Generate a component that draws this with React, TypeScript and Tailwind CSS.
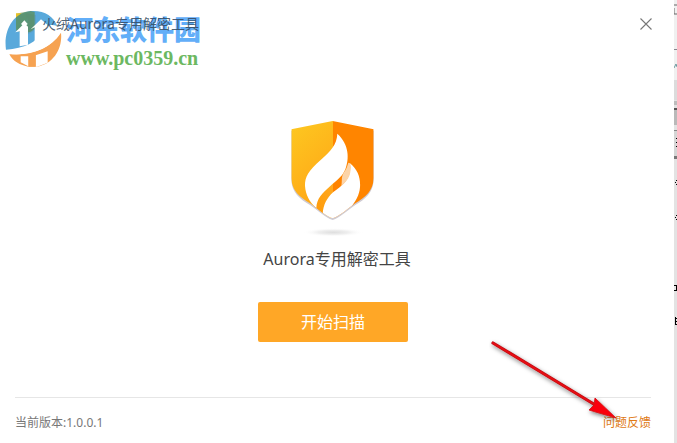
import React from 'react';

const Shield: React.FC = () => (
  <svg viewBox="60 30 255 351" className="w-[85px] h-[117px]" aria-hidden="true">
    <defs>
      <linearGradient id="gold" x1="0" y1="0" x2="0.4" y2="1">
        <stop offset="0" stopColor="#fdc921" />
        <stop offset="1" stopColor="#ffa516" />
      </linearGradient>
      <linearGradient id="stem" x1="0" y1="1" x2="1" y2="0">
        <stop offset="0" stopColor="#ff9a08" />
        <stop offset="1" stopColor="#ffb02c" />
      </linearGradient>
      <radialGradient id="floor">
        <stop offset="0" stopColor="#dedede" />
        <stop offset="0.5" stopColor="#efefef" />
        <stop offset="1" stopColor="#ffffff" stopOpacity="0" />
      </radialGradient>
      <clipPath id="body">
        <path d="M188 33 L64 58 V204 C65 242 90 262 120 280 C146 298 166 318 188 325 C210 318 230 298 256 280 C286 262 310 242 311 204 V58 Z" />
      </clipPath>
    </defs>
    <ellipse cx="190" cy="367" rx="92" ry="13" fill="url(#floor)" />
    <path d="M64 62 V209 C65 247 90 267 120 285 C146 303 166 323 188 330 C210 323 230 303 256 285 C286 267 310 247 311 209 V62 Z" fill="#cfcbd2" />
    <g clipPath="url(#body)">
      <path d="M60 30 H189 V330 H60 Z" fill="url(#gold)" />
      <path d="M189 30 H315 V330 H189 Z" fill="#ff8500" />
      <path d="M136 296 C139 268 156 250 180 229 L218 192 L218 226 L190 248 C170 264 160 280 160 312 Z" fill="url(#stem)" />
      <path d="M189 221 L219 192 V226 L189 250 Z" fill="#ff8300" />
      <path d="M202 71 C200 106 182 122 152 150 C116 182 104 200 105 228 C107 254 118 276 139 294 C140 266 156 250 181 228 C204 208 218 198 226 178 C238 146 238 104 202 71 Z" fill="#fff" />
      <path d="M240 160 C264 180 272 204 270 232 C268 256 258 272 240 296 L188 330 L158 312 C160 284 170 264 190 246 C222 224 246 202 240 160 Z" fill="#fff" />
      <path d="M235 158 L240 160 C246 188 238 209 214 228 C217 211 213 200 222 187 C229 177 232 169 235 158 Z" fill="#fcd4a8" />
    </g>
  </svg>
);

const AppIcon: React.FC = () => (
  <svg viewBox="0 0 20 22" className="w-5 h-[22px]" aria-hidden="true">
    <path d="M0 2 L10 0 V22 C4 20 0 17 0 12 Z" fill="#fdc421" />
    <path d="M10 0 L20 2 V12 C20 17 16 20 10 22 Z" fill="#ff8500" />
    <path d="M11 4 C11 9 5 10 5 15 L8 19 C8 14 14 12 11 4 Z" fill="#fff" />
  </svg>
);

const Watermark: React.FC = () => (
  <div className="absolute left-1 top-[10px] flex gap-1 pointer-events-none" aria-hidden="true">
    <svg viewBox="12 30 174 171" className="w-[58px] h-[57px]">
      <path d="M18 149 C10 94 38 38 92 33 C132 30 160 48 172 78 C150 70 135 78 125 94 C112 128 72 145 18 149 Z" fill="#4ba2d8" fillOpacity="0.92" />
      <path d="M48 42 L62 38 L92 33 L104 36 V85 C93 99 73 105 48 91 Z" fill="#5b8a3c" fillOpacity="0.6" />
      <path d="M48 40 H64 L48 52 Z" fill="#e8c22a" />
      <path d="M183 98 C188 143 163 190 112 200 H86 C60 196 39 184 28 163 C91 165 151 148 183 98 Z" fill="#f6a251" />
      <path d="M18 151 C74 150 120 130 153 95 L165 82 L181 98 C150 149 90 168 25 161 Z" fill="#fff" />
      <path d="M59 139 V94 L46 97 L73 70 L84 80 V134 Z M104 125 V82 L92 88 L123 58 L142 74 V112 Z" fill="#fff" />
      <path d="M62 169 H85 V199 L62 187 Z M107 166 L143 154 V188 L112 200 H107 Z" fill="#fff" />
      <path d="M86 165 H107 V200 H86 Z" fill="#f6a251" />
      <path d="M73 61 L83 72 L73 81 L63 72 Z" fill="#fff" />
    </svg>
    <div className="flex flex-col">
      <span className="text-[27px] leading-[38px] font-black text-[#62aef8] font-['Noto_Sans_CJK_SC',sans-serif]">河东软件园</span>
      <span className="text-[20px] leading-[20px] font-bold text-[#6cb861] font-['Liberation_Serif',serif]">www.pc0359.cn</span>
    </div>
  </div>
);

const Arrow: React.FC = () => (
  <svg viewBox="0 0 130 84" className="absolute right-[58px] bottom-[20px] w-[130px] h-[84px] pointer-events-none" aria-hidden="true">
    <defs>
      <filter id="shade" x="-20%" y="-20%" width="140%" height="140%">
        <feDropShadow dx="1" dy="2" stdDeviation="2" floodColor="#000" floodOpacity="0.5" />
      </filter>
    </defs>
    <g filter="url(#shade)">
      <path d="M4 4 L108 67" stroke="#b80d14" strokeWidth="3.2" strokeLinecap="round" />
      <path d="M4 4 L108 67" stroke="#e60c12" strokeWidth="2" strokeLinecap="round" />
      <path d="M127 79 L100 71 L105 66 L106 59 Z" fill="#fa060c" stroke="#d00a10" strokeWidth="0.8" />
    </g>
  </svg>
);

// sliver of the window behind, showing past the dialog's right edge
const BackWindow: React.FC = () => (
  <div className="w-[3px] shrink-0 bg-[#e3e3e3]">
    <svg viewBox="0 0 3 443" className="w-[3px] h-[443px]" aria-hidden="true">
      <path d="M0 0 H3 V100 H0 Z" fill="#f0f0f0" />
      <path d="M0 5 H3 M0 8 V14 H3" stroke="#666" fill="none" />
      <path d="M0 49 H3 V50 H0 Z" fill="#88868e" />
      <path d="M0 68 L2 64 L3 67" stroke="#6d9aa0" fill="none" />
      <path d="M0 80 H3 V100 H0 Z" fill="#dcdcdc" />
      <path d="M0 101 H3 V105 H0 Z" fill="#bdbdbd" />
      <path d="M0 108 H3 V110 H0 Z" fill="#555" />
      <path d="M0 110 H3 V125 H0 Z" fill="#b9b9b9" />
      <path d="M0 130 H3 V131 H0 Z" fill="#888" />
      <path d="M0 131 H3 V156 H0 Z" fill="#d5d5d5" />
      <path d="M0 156 H3 V159 H0 Z" fill="#777" />
      <path d="M2 138.5 H3 M2 142.5 H3 M2 146.5 H3 M2 180.5 H3 M1 182.5 H2 M2 184.5 H3 M2 215.5 H3 M1 217.5 H2 M2 219.5 H3" stroke="#000" />
      <path d="M0 285.5 H3 M2.5 285 V290 M0 290.5 H3 M1.5 317 V325 M1 318.5 H3 M1 321.5 H3 M1 324.5 H3" stroke="#000" fill="none" />
    </svg>
  </div>
);

const App: React.FC = () => {
  return (
    <div className="relative flex min-h-screen overflow-hidden bg-white font-['Noto_Sans','Noto_Sans_CJK_SC',sans-serif]">
      <main className="flex flex-1 flex-col">
        <header className="flex h-12 items-center justify-between pl-4 pr-[21px]">
          <div className="flex items-center gap-[6px]">
            <AppIcon />
            <h1 className="relative z-10 text-[14px] leading-5 text-[#33485c]/85">火绒Aurora专用解密工具</h1>
          </div>
          <button type="button" aria-label="关闭" className="p-px">
            <svg viewBox="0 0 12 12" className="w-3 h-3" stroke="#777" strokeWidth="1.1" aria-hidden="true">
              <path d="M0.5 0.5 L11.5 11.5 M11.5 0.5 L0.5 11.5" />
            </svg>
          </button>
        </header>

        <section className="flex flex-1 flex-col items-center pt-[72px]">
          <div className="flex flex-col items-center pr-[10px]">
            <Shield />
          </div>
          <h2 className="mt-[10px] text-[16px] leading-6 text-[#444]">Aurora专用解密工具</h2>
          <button
            type="button"
            className="mt-[31px] mr-2 h-10 w-[150px] rounded-xs bg-[#ffa726] text-[16px] leading-6 text-white hover:bg-[#ff9d0f]"
          >
            开始扫描
          </button>
        </section>

        <footer className="ml-[15px] mr-[23px] flex h-[46px] items-center justify-between border-t border-[#e6e6e6] pt-1 text-[12px] leading-4">
          <span className="text-[#777]">当前版本:1.0.0.1</span>
          <a href="#feedback" className="text-[#e07a14]">问题反馈</a>
        </footer>
      </main>

      <BackWindow />
      <Watermark />
      <Arrow />
    </div>
  );
};

export default App;
